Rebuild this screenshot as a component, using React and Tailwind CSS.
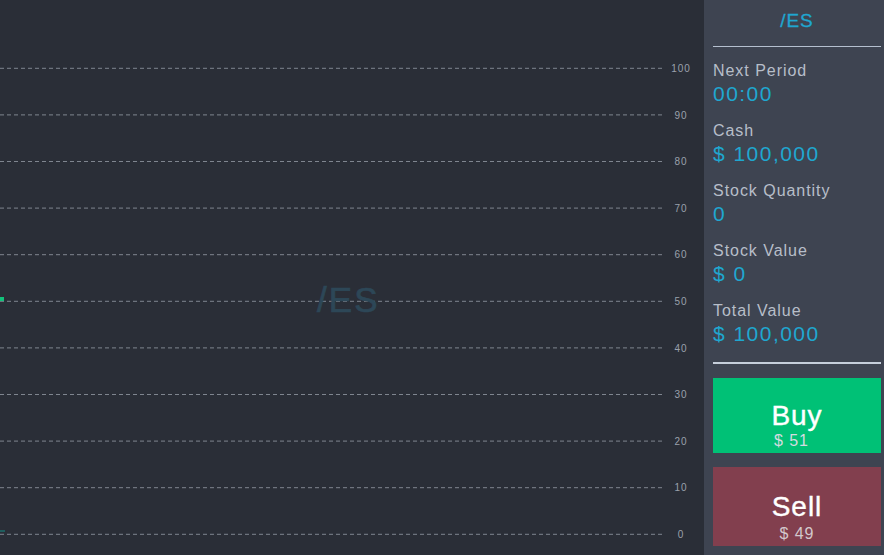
import React from "react";

const levels = [100, 90, 80, 70, 60, 50, 40, 30, 20, 10, 0];
const yOf = (v) => 534.3 - (v / 10) * 46.6;

function Chart() {
  return (
    <div className="relative flex-1 h-full bg-[#2a2e37] overflow-hidden">
      <svg width="704" height="555" className="absolute inset-0" style={{ fontFamily: '"Liberation Sans", Arial, sans-serif' }}>
        {levels.map((v) => (
          <g key={v}>
            <line x1="0" x2="665" y1={yOf(v)} y2={yOf(v)} stroke="#7f858f" strokeWidth="1" strokeDasharray="4 3" />
            <text x="681" y={yOf(v) + 3.6} textAnchor="middle" fontSize="10" fill="#9aa1ac">{v}</text>
          </g>
        ))}
        <rect x="0" y="297" width="4" height="4" fill="#12c27b" />
        <rect x="0" y="530" width="5" height="2" fill="#1f5e5e" />
      </svg>
      <div className="absolute left-[317px] top-[280px] text-[35px] leading-[40px] tracking-[0.06em] text-[#2d4757] [-webkit-text-stroke:0.7px_#2d4757]">/ES</div>
    </div>
  );
}

function Stat({ label, value }) {
  return (
    <div className="flex flex-col gap-[2px]">
      <div className="text-[16px] leading-[18px] text-[#b7bec9]">{label}</div>
      <div className="text-[21px] leading-[24px] tracking-[0.07em] text-[#1fa7d0]">{value}</div>
    </div>
  );
}

export default function App() {
  return (
    <div
      className="flex w-[884px] h-[555px] overflow-hidden tracking-[0.06em]"
      style={{ fontFamily: '"Liberation Sans", Arial, sans-serif' }}
    >
      <Chart />
      <div className="w-[180px] h-full bg-[#3e4451] pl-[9px] pr-[3px] pt-[10px] flex flex-col">
        <div className="text-center text-[19px] leading-[22px] text-[#1fa7d0] [-webkit-text-stroke:0.3px_#1fa7d0]">/ES</div>
        <div className="mt-[14px] h-px bg-[#b5c0cf]" />
        <div className="mt-[15px] flex flex-col gap-[16px]">
          <Stat label="Next Period" value="00:00" />
          <Stat label="Cash" value="$ 100,000" />
          <Stat label="Stock Quantity" value="0" />
          <Stat label="Stock Value" value="$ 0" />
          <Stat label="Total Value" value="$ 100,000" />
        </div>
        <div className="mt-[16px] h-[2px] bg-[#c6cfdb]" />
        <button className="mt-[14px] h-[75px] bg-[#00c176] flex flex-col items-center justify-end pb-[4px] tracking-[0.06em]">
          <span className="text-[28px] leading-[30px] text-white [-webkit-text-stroke:0.4px_#ffffff]">Buy</span>
          <span className="mt-[2px] mr-[11px] text-[16px] leading-[16px] text-[#d3dbe0]">$ 51</span>
        </button>
        <button className="mt-[14px] h-[79px] bg-[#823f4e] flex flex-col items-center justify-end pb-[4px] tracking-[0.06em]">
          <span className="text-[28px] leading-[30px] text-white [-webkit-text-stroke:0.4px_#ffffff]">Sell</span>
          <span className="mt-[4px] text-[16px] leading-[16px] text-[#d3c8cc]">$ 49</span>
        </button>
      </div>
    </div>
  );
}
